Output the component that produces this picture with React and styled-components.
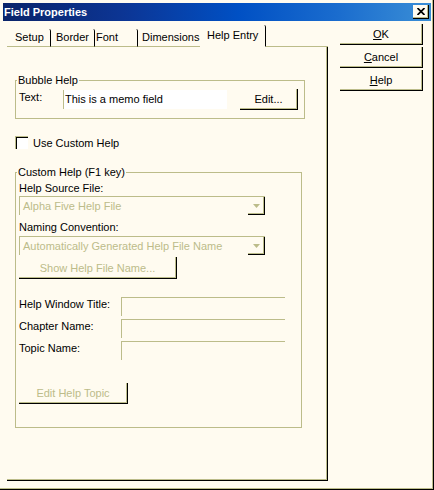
import React from 'react';
import styled, { createGlobalStyle } from 'styled-components';

const KHAKI = '#bcbc8a';
const FACE = '#fffbf0';

const GlobalStyle = createGlobalStyle`
  html, body {
    margin: 0;
    padding: 0;
    background: ${FACE};
  }
  body {
    font-family: "Liberation Sans", Arial, sans-serif;
    font-size: 11px;
    color: #000;
  }
  * { box-sizing: border-box; }
`;

const Window = styled.div`
  width: 434px;
  height: 490px;
  padding: 3px;
  background: ${FACE};
  box-shadow: inset -1px -1px 0 #000, inset -2px -2px 0 ${KHAKI};
  display: flex;
  flex-direction: column;
`;

const TitleBar = styled.div`
  height: 18px;
  display: flex;
  align-items: center;
  justify-content: space-between;
  padding: 0 2px 0 1px;
  background: linear-gradient(90deg, #0a246a 0%, #0c3594 28%, #0050c4 55%, #1a6cce 78%, #3a8ed6 100%);
  color: #fff;
  font-weight: bold;
  font-size: 11px;
`;

const CloseButton = styled.div`
  width: 16px;
  height: 14px;
  display: flex;
  align-items: center;
  justify-content: center;
  background: ${FACE};
  box-shadow: inset -1px -1px 0 #000, inset -2px -2px 0 ${KHAKI};
  padding: 0 1px 1px 0;
`;

const Body = styled.div`
  display: flex;
  margin-top: 3px;
  padding-left: 4px;
`;

const LeftCol = styled.div`
  width: 321px;
  display: flex;
  flex-direction: column;
`;

const TabStrip = styled.div`
  height: 23px;
  display: flex;
  align-items: flex-end;
`;

const Tab = styled.div`
  width: ${p => p.$w}px;
  height: ${p => (p.$active ? 22 : 18)}px;
  padding-left: ${p => p.$pad}px;
  line-height: ${p => (p.$active ? 21 : 17)}px;
  white-space: nowrap;
  border-right: ${p => (p.$noEdge ? 'none' : '1px solid #000')};
  border-bottom: 1px solid ${p => (p.$active ? FACE : KHAKI)};
  border-top-right-radius: 2px;
`;

const TabFiller = styled.div`
  flex: 1;
  height: 1px;
  background: ${KHAKI};
`;

const Panel = styled.div`
  height: 434px;
  padding: 27px 0 0 8px;
  box-shadow: inset -1px -1px 0 #000, inset -2px -2px 0 ${KHAKI};
`;

const Group = styled.fieldset`
  width: ${p => p.$w}px;
  margin: ${p => p.$mt || 0}px 0 0 0;
  padding: ${p => p.$pt}px 0 ${p => p.$pb}px 3px;
  border: 1px solid ${KHAKI};
  min-width: 0;
`;

const Legend = styled.legend`
  padding: 0 1px;
  margin-left: -2px;
  line-height: 13px;
`;

const Row = styled.div`
  display: flex;
  align-items: flex-start;
  margin-top: ${p => p.$mt || 0}px;
`;

const Label = styled.div`
  width: ${p => (p.$w ? `${p.$w}px` : 'auto')};
  line-height: 13px;
  margin-top: ${p => p.$mt || 0}px;
  white-space: nowrap;
`;

const TextField = styled.div`
  width: 164px;
  height: 19px;
  margin-top: ${p => p.$mt || 0}px;
  background: ${p => (p.$white ? '#fff' : FACE)};
  border-left: 1px solid ${KHAKI};
  border-top: ${p => (p.$white ? 'none' : `1px solid ${KHAKI}`)};
  padding: 3px 0 0 1px;
  line-height: 13px;
  white-space: nowrap;
`;

const Button = styled.div`
  width: ${p => p.$w}px;
  height: ${p => p.$h || 21}px;
  margin-top: ${p => p.$mt || 0}px;
  margin-left: ${p => p.$ml || 0}px;
  display: flex;
  align-items: center;
  justify-content: center;
  padding: 0 1px 1px 0;
  color: ${p => (p.$disabled ? KHAKI : '#000')};
  box-shadow: inset -1px -1px 0 #000, inset -2px -2px 0 ${KHAKI};
  white-space: nowrap;
`;

const CheckRow = styled.div`
  display: flex;
  align-items: center;
  margin-top: 17px;
  height: 13px;
`;

const CheckBox = styled.div`
  width: 13px;
  height: 13px;
  background: #fff;
  border-top: 1px solid ${KHAKI};
  border-left: 1px solid ${KHAKI};
  box-shadow: inset 1px 1px 0 #000;
  margin-right: 5px;
`;

const Combo = styled.div`
  width: 246px;
  height: 19px;
  margin-top: ${p => p.$mt || 0}px;
  display: flex;
  border-top: 1px solid ${KHAKI};
  border-left: 1px solid ${KHAKI};
  background: ${FACE};
`;

const ComboText = styled.div`
  flex: 1;
  padding: 3px 0 0 3px;
  line-height: 13px;
  color: ${KHAKI};
  white-space: nowrap;
  overflow: hidden;
`;

const DropButton = styled.div`
  width: 17px;
  height: 18px;
  display: flex;
  align-items: center;
  justify-content: center;
  padding: 0 1px 1px 0;
  box-shadow: inset -1px -1px 0 #000, inset -2px -2px 0 ${KHAKI};
`;

const RightCol = styled.div`
  display: flex;
  flex-direction: column;
  gap: 2px;
  margin-left: 12px;
`;

const Arrow = () => (
  <svg width="7" height="4" viewBox="0 0 7 4">
    <polygon points="0,0 7,0 3.5,4" fill={KHAKI} />
  </svg>
);

const tabs = [
  { name: 'Setup', w: 44, pad: 8 },
  { name: 'Border', w: 44, pad: 5 },
  { name: 'Font', w: 43, pad: 1 },
  { name: 'Dimensions', w: 62, pad: 4, noEdge: true },
  { name: 'Help Entry', w: 66, pad: 7, active: true },
];

const helpFields = ['Help Window Title:', 'Chapter Name:', 'Topic Name:'];

export default function App() {
  return (
    <>
      <GlobalStyle />
      <Window>
        <TitleBar>
          <span>Field Properties</span>
          <CloseButton>
            <svg width="8" height="7" viewBox="0 0 8 7">
              <path d="M0.5 0 L7.5 7 M7.5 0 L0.5 7" stroke="#000" strokeWidth="1.7" />
            </svg>
          </CloseButton>
        </TitleBar>
        <Body>
          <LeftCol>
            <TabStrip>
              {tabs.map(t => (
                <Tab key={t.name} $w={t.w} $pad={t.pad} $active={t.active} $noEdge={t.noEdge}>
                  {t.name}
                </Tab>
              ))}
              <TabFiller />
            </TabStrip>
            <Panel>
              <Group $w={290} $pt={2} $pb={8}>
                <Legend>Bubble Help</Legend>
                <Row>
                  <Label $w={44} $mt={2}>Text:</Label>
                  <TextField $white $mt={1}>This is a memo field</TextField>
                  <Button $w={58} $ml={13}>Edit...</Button>
                </Row>
              </Group>

              <CheckRow>
                <CheckBox />
                <span>Use Custom Help</span>
              </CheckRow>

              <Group $w={287} $mt={17} $pt={0} $pb={23}>
                <Legend>Custom Help (F1 key)</Legend>
                <Label $mt={3}>Help Source File:</Label>
                <Combo $mt={1}>
                  <ComboText>Alpha Five Help File</ComboText>
                  <DropButton><Arrow /></DropButton>
                </Combo>
                <Label $mt={6}>Naming Convention:</Label>
                <Combo $mt={2}>
                  <ComboText>Automatically Generated Help File Name</ComboText>
                  <DropButton><Arrow /></DropButton>
                </Combo>
                <Button $w={158} $h={22} $mt={2} $disabled>Show Help File Name...</Button>
                {helpFields.map((f, i) => (
                  <Row key={f} $mt={i === 0 ? 18 : 3}>
                    <Label $w={102} $mt={1}>{f}</Label>
                    <TextField />
                  </Row>
                ))}
                <Button $w={109} $mt={23} $disabled>Edit Help Topic</Button>
              </Group>
            </Panel>
          </LeftCol>
          <RightCol>
            <Button $w={83}><span><u>O</u>K</span></Button>
            <Button $w={83}><span><u>C</u>ancel</span></Button>
            <Button $w={83}><span><u>H</u>elp</span></Button>
          </RightCol>
        </Body>
      </Window>
    </>
  );
}
